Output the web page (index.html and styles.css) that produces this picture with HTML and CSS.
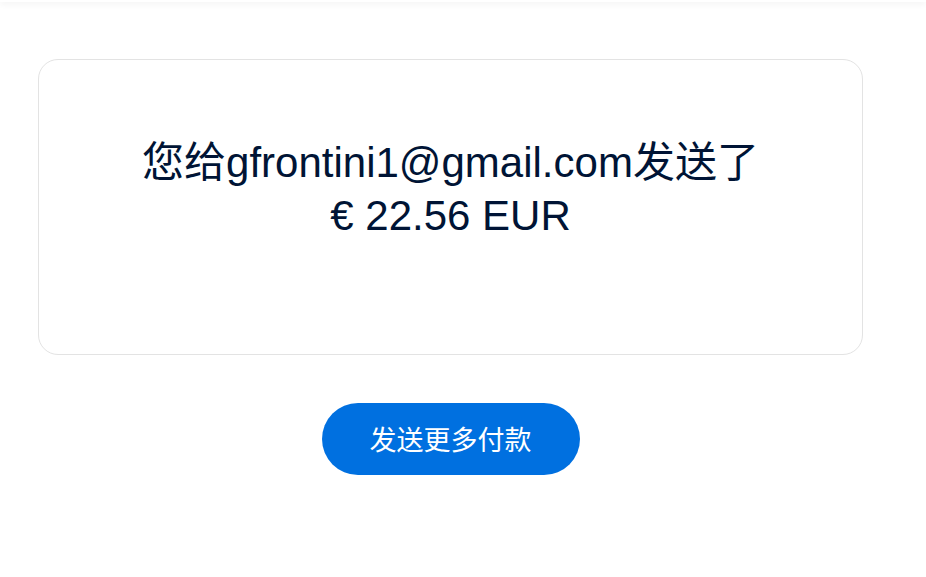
FILE: index.html
```html
<!DOCTYPE html>
<html lang="zh-CN">
<head>
<meta charset="utf-8">
<title>付款已发送</title>
<link rel="stylesheet" href="styles.css">
</head>
<body>
<header class="topbar"></header>
<main class="page">
  <section class="card">
    <h1 class="message">您给gfrontini1@gmail.com发送了<br>€ 22.56 EUR</h1>
  </section>
  <div class="actions">
    <button class="primary-btn" type="button">发送更多付款</button>
  </div>
</main>
</body>
</html>
```

FILE: styles.css
```css
* { box-sizing: border-box; }
html, body {
  margin: 0;
  padding: 0;
  background: #ffffff;
}
body {
  font-family: "Liberation Sans", Arial, "Noto Sans CJK SC", sans-serif;
  color: #001435;
}
.topbar {
  height: 2px;
  background: #ffffff;
  box-shadow: 0 1px 6px rgba(0, 0, 0, 0.12);
}
.page {
  width: 863px;
  padding: 57px 0 0 38px;
}
.card {
  border: 1px solid #e3e3e3;
  border-radius: 20px;
  height: 296px;
  padding: 76px 20px 0;
}
.message {
  margin: 0;
  font-weight: 400;
  font-size: 42px;
  line-height: 53px;
  text-align: center;
  color: #001435;
}
.actions {
  display: flex;
  justify-content: center;
  padding-top: 48px;
}
.primary-btn {
  border: none;
  background: #0070e0;
  color: #ffffff;
  font-family: "Liberation Sans", Arial, "Noto Sans CJK SC", sans-serif;
  font-size: 27px;
  height: 72px;
  width: 258px;
  border-radius: 36px;
  padding: 0 0 2px;
}
```
